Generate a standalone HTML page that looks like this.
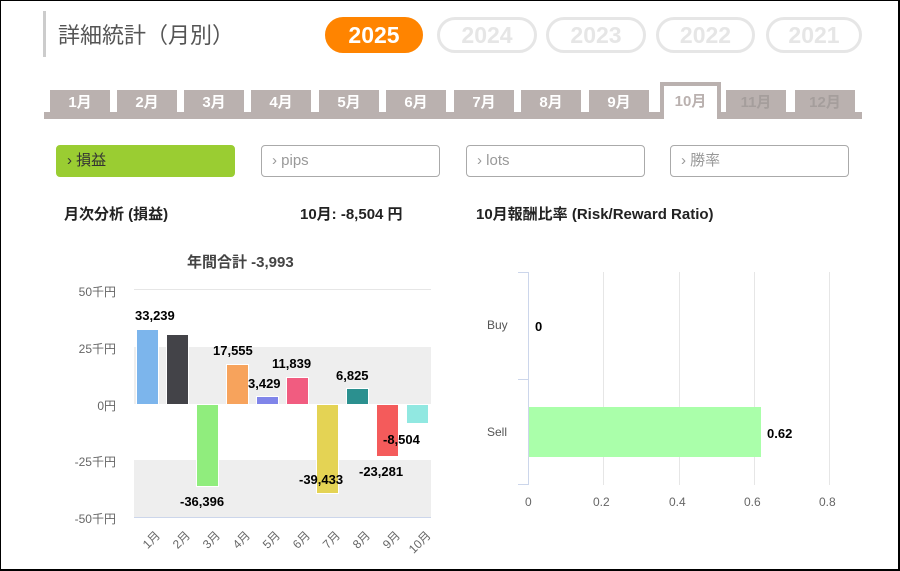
<!DOCTYPE html>
<html><head><meta charset="utf-8"><style>
*{margin:0;padding:0;box-sizing:border-box}
body{width:900px;height:571px;overflow:hidden;background:#fff;font-family:"Liberation Sans","Noto Sans CJK JP",sans-serif;position:relative}
.a{position:absolute}
.frame{left:0;top:0;width:900px;height:571px;border:1px solid #000;border-right:2px solid #000;border-bottom:2px solid #000}
.pill{height:36px;top:17px;border-radius:18px;font-weight:bold;font-size:23px;line-height:30px;text-align:center;border:3px solid #e6e6e6;color:#e6e6e6}
.tab{top:90px;height:24px;width:60px;background:#bab1af;color:#fff;font-weight:bold;font-size:15px;text-align:center;line-height:25px}
.btn{top:145px;height:32px;width:179px;border:1px solid #aaa;border-radius:4px;color:#999;font-size:15px;line-height:29px;padding-left:10px}
.bar{border:1px solid #fff;width:23px}
.lb{font-size:13px;font-weight:bold;color:#000;white-space:nowrap}
.yl{font-size:12px;color:#666;text-align:right;width:80px;left:36px}
.xl{font-size:12px;color:#666;transform:rotate(-45deg);transform-origin:right top;white-space:nowrap}
.h{font-size:15px;font-weight:bold;color:#222}
</style></head><body>
<div class="a frame"></div>
<div class="a" style="left:43px;top:11px;width:3px;height:46px;background:#ccc"></div>
<div class="a" style="left:58px;top:18px;font-size:22px;color:#555">詳細統計（月別）</div>
<div class="a pill" style="left:325px;width:98px;background:#ff8400;border-color:#ff8400;color:#fff">2025</div>
<div class="a pill" style="left:437px;width:100px">2024</div>
<div class="a pill" style="left:546px;width:100px">2023</div>
<div class="a pill" style="left:656px;width:99px">2022</div>
<div class="a pill" style="left:766px;width:96px">2021</div>

<div class="a" style="left:44px;top:112px;width:818px;height:7px;background:#bab1af"></div>
<div class="a tab" style="left:50px">1月</div>
<div class="a tab" style="left:117px">2月</div>
<div class="a tab" style="left:184px">3月</div>
<div class="a tab" style="left:251px">4月</div>
<div class="a tab" style="left:319px">5月</div>
<div class="a tab" style="left:386px">6月</div>
<div class="a tab" style="left:454px">7月</div>
<div class="a tab" style="left:521px">8月</div>
<div class="a tab" style="left:589px">9月</div>
<div class="a" style="left:660px;top:82px;width:61px;height:37px;border:4px solid #bab1af;border-bottom:none;background:#fff;color:#bab1af;font-weight:bold;font-size:15px;text-align:center;line-height:31px">10月</div>
<div class="a tab" style="left:726px;color:#a59e9c">11月</div>
<div class="a tab" style="left:795px;color:#a59e9c">12月</div>

<div class="a btn" style="left:56px;background:#9acd32;border-color:#9acd32;color:#333">› 損益</div>
<div class="a btn" style="left:261px">› pips</div>
<div class="a btn" style="left:466px">› lots</div>
<div class="a btn" style="left:670px">› 勝率</div>

<div class="a h" style="left:64px;top:203px">月次分析 (損益)</div>
<div class="a h" style="left:300px;top:203px">10月: -8,504 円</div>
<div class="a h" style="left:476px;top:203px">10月報酬比率 (Risk/Reward Ratio)</div>

<div class="a" style="left:187px;top:251px;font-size:15px;font-weight:bold;color:#444">年間合計 -3,993</div>
<div class="a" style="left:134px;top:289px;width:297px;height:1px;background:#e6e6e6"></div>
<div class="a" style="left:134px;top:347px;width:297px;height:57px;background:#eee"></div>
<div class="a" style="left:134px;top:460px;width:297px;height:57px;background:#eee"></div>
<div class="a" style="left:134px;top:517px;width:297px;height:1px;background:#ccd6eb"></div>
<div class="a yl" style="top:283px">50千円</div>
<div class="a yl" style="top:340px">25千円</div>
<div class="a yl" style="top:397px">0円</div>
<div class="a yl" style="top:453px">-25千円</div>
<div class="a yl" style="top:510px">-50千円</div>

<div class="a bar" style="left:136px;top:329px;height:76px;background:#7cb5ec"></div>
<div class="a bar" style="left:166px;top:334px;height:71px;background:#434348"></div>
<div class="a bar" style="left:196px;top:404px;height:83px;background:#90ed7d"></div>
<div class="a bar" style="left:226px;top:364px;height:41px;background:#f7a35c"></div>
<div class="a bar" style="left:256px;top:396px;height:9px;background:#8085e9"></div>
<div class="a bar" style="left:286px;top:377px;height:28px;background:#f15c80"></div>
<div class="a bar" style="left:316px;top:404px;height:90px;background:#e4d354"></div>
<div class="a bar" style="left:346px;top:388px;height:17px;background:#2b908f"></div>
<div class="a bar" style="left:376px;top:404px;height:53px;background:#f45b5b"></div>
<div class="a bar" style="left:406px;top:404px;height:20px;background:#91e8e1"></div>

<div class="a lb" style="left:135px;top:308px">33,239</div>
<div class="a lb" style="left:213px;top:343px">17,555</div>
<div class="a lb" style="left:248px;top:376px">3,429</div>
<div class="a lb" style="left:272px;top:356px">11,839</div>
<div class="a lb" style="left:336px;top:368px">6,825</div>
<div class="a lb" style="left:180px;top:494px">-36,396</div>
<div class="a lb" style="left:299px;top:472px">-39,433</div>
<div class="a lb" style="left:359px;top:464px">-23,281</div>
<div class="a lb" style="left:383px;top:432px">-8,504</div>

<div class="a xl" style="right:748px;top:527px">1月</div>
<div class="a xl" style="right:718px;top:527px">2月</div>
<div class="a xl" style="right:688px;top:527px">3月</div>
<div class="a xl" style="right:658px;top:527px">4月</div>
<div class="a xl" style="right:628px;top:527px">5月</div>
<div class="a xl" style="right:598px;top:527px">6月</div>
<div class="a xl" style="right:568px;top:527px">7月</div>
<div class="a xl" style="right:538px;top:527px">8月</div>
<div class="a xl" style="right:508px;top:527px">9月</div>
<div class="a xl" style="right:478px;top:527px">10月</div>

<div class="a" style="left:603px;top:272px;width:1px;height:213px;background:#e6e6e6"></div>
<div class="a" style="left:679px;top:272px;width:1px;height:213px;background:#e6e6e6"></div>
<div class="a" style="left:754px;top:272px;width:1px;height:213px;background:#e6e6e6"></div>
<div class="a" style="left:829px;top:272px;width:1px;height:213px;background:#e6e6e6"></div>
<div class="a" style="left:528px;top:272px;width:1px;height:213px;background:#ccd6eb"></div>
<div class="a" style="left:518px;top:272px;width:10px;height:1px;background:#ccd6eb"></div>
<div class="a" style="left:518px;top:379px;width:10px;height:1px;background:#ccd6eb"></div>
<div class="a" style="left:518px;top:484px;width:10px;height:1px;background:#ccd6eb"></div>
<div class="a" style="left:529px;top:407px;width:232px;height:50px;background:#aaffaa"></div>
<div class="a" style="left:487px;top:318px;font-size:12px;color:#555">Buy</div>
<div class="a" style="left:487px;top:425px;font-size:12px;color:#555">Sell</div>
<div class="a lb" style="left:535px;top:319px">0</div>
<div class="a lb" style="left:767px;top:426px">0.62</div>
<div class="a" style="left:525px;top:495px;font-size:12px;color:#666">0</div>
<div class="a" style="left:593px;top:495px;font-size:12px;color:#666">0.2</div>
<div class="a" style="left:669px;top:495px;font-size:12px;color:#666">0.4</div>
<div class="a" style="left:744px;top:495px;font-size:12px;color:#666">0.6</div>
<div class="a" style="left:819px;top:495px;font-size:12px;color:#666">0.8</div>
</body></html>
